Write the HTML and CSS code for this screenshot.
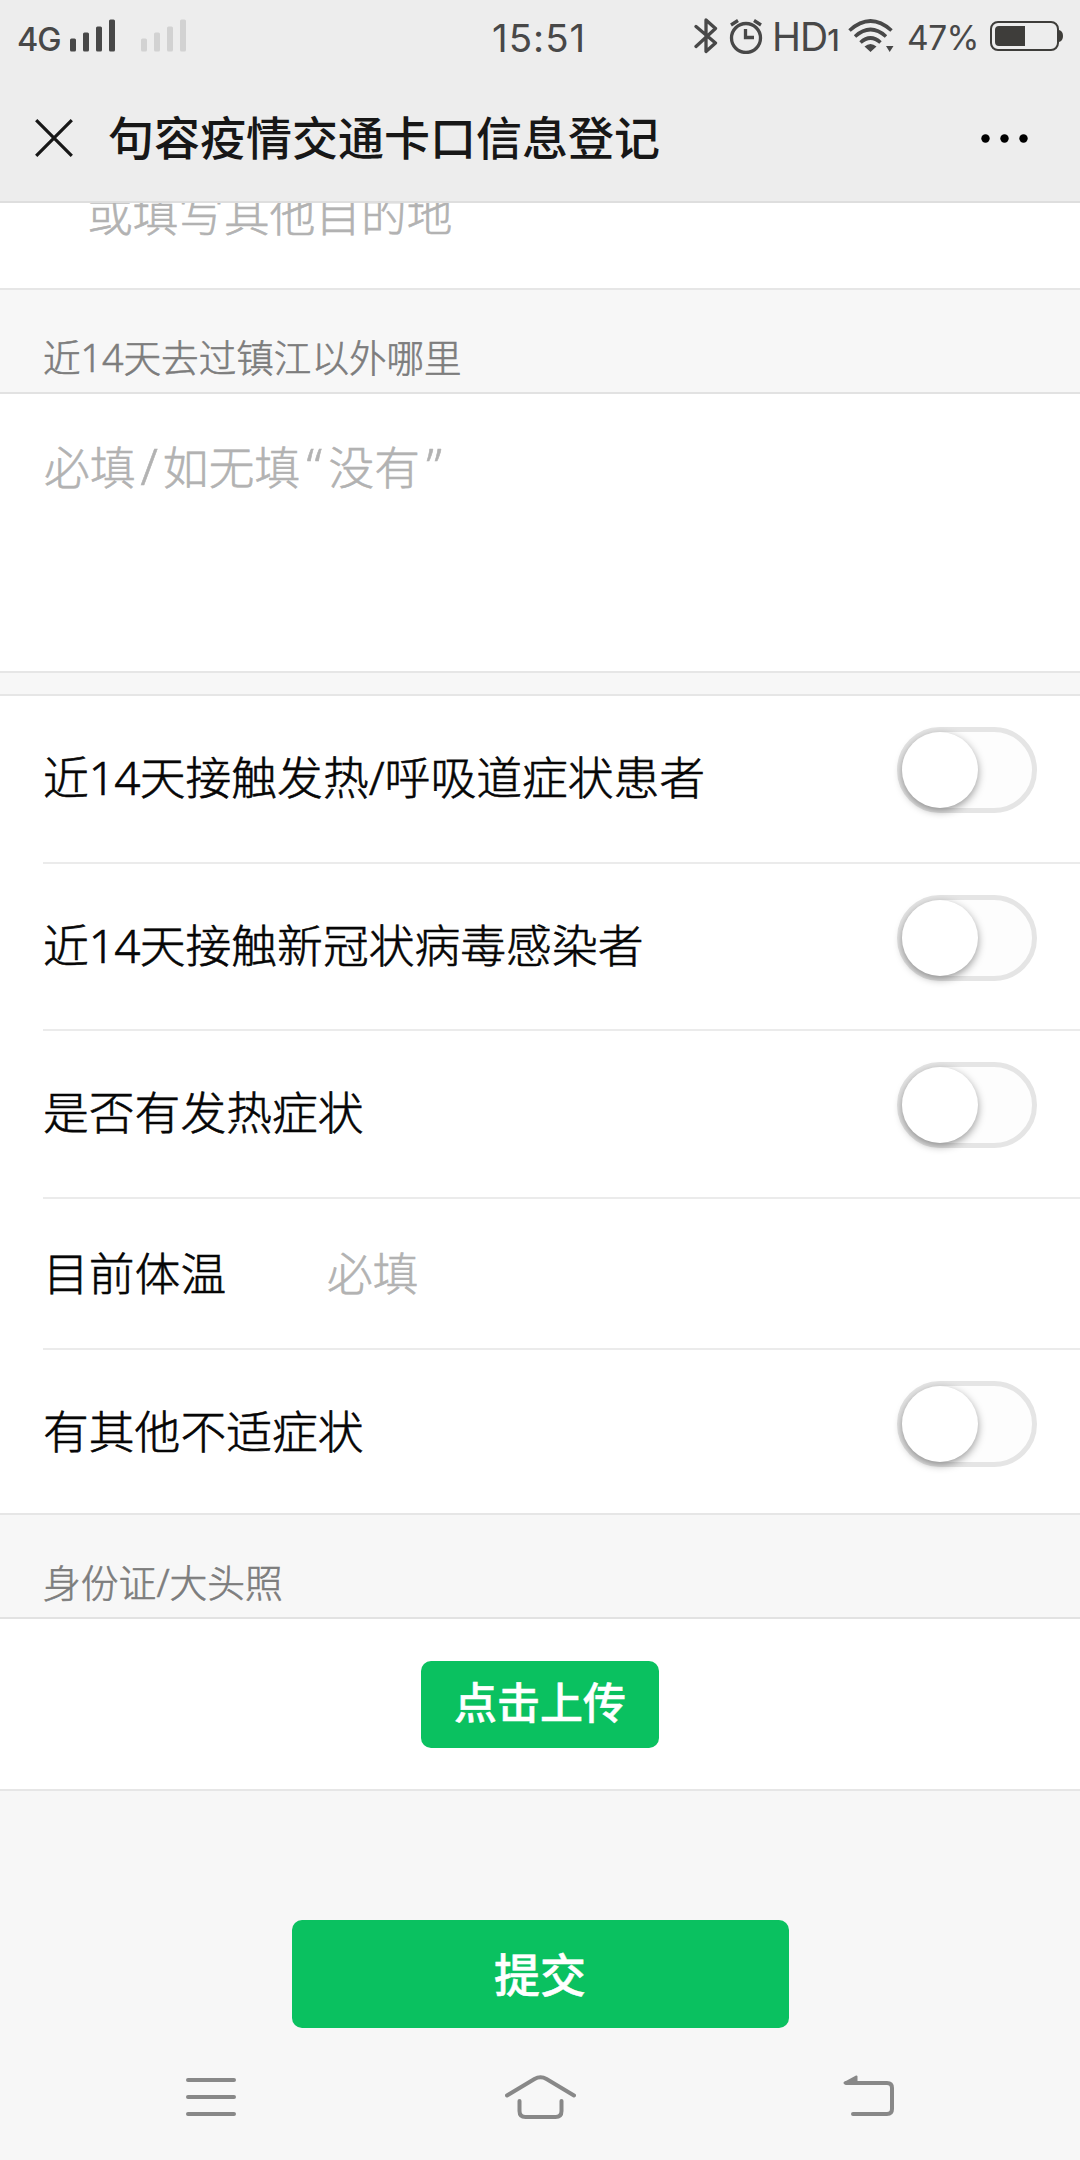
FILE: index.html
```html
<!DOCTYPE html>
<html lang="zh-CN">
<head>
<meta charset="utf-8">
<title>句容疫情交通卡口信息登记</title>
<link rel="stylesheet" href="styles.css">
</head>
<body>
<div class="screen">
  <header class="top">
    <div class="status">
      <div class="status-left">
        <span class="net">4G</span>
        <svg class="signal" width="46" height="33" viewBox="0 0 46 33" fill="#484848"><rect y="19.500" width="6" height="13" rx="1.500"/><rect x="13" y="13.500" width="6" height="19" rx="1.500"/><rect x="26" y="7.500" width="6" height="25" rx="1.500"/><rect x="39" y=".5" width="6" height="32" rx="1.500"/></svg>
        <svg class="signal signal-off" width="46" height="33" viewBox="0 0 46 33" fill="#d2d2d2"><rect y="19.500" width="6" height="13" rx="1.500"/><rect x="13" y="13.500" width="6" height="19" rx="1.500"/><rect x="26" y="7.500" width="6" height="25" rx="1.500"/><rect x="39" y=".5" width="6" height="32" rx="1.500"/></svg>
      </div>
      <div class="clock">15:51</div>
      <div class="status-right">
        <svg class="bt" width="24" height="36" viewBox="0 0 24 36" fill="none" stroke="#484848" stroke-width="3.300" stroke-linejoin="round" stroke-linecap="round"><path d="M2 8.500L21.500 25 12 33.500V2L21.500 10.500 2 28.500"/></svg>
        <svg class="alarm" width="34" height="36" viewBox="0 0 34 36" fill="none" stroke="#484848" stroke-width="3.300"><circle cx="17" cy="20" r="14.500"/><path d="M16.500 11V19.500H25M2 7L9 2.500M25 2.500L32 7"/></svg>
        <span class="hd">HD<small>1</small></span>
        <svg class="wifi" width="46" height="34" viewBox="0 0 46 34" fill="none" stroke="#484848" stroke-width="3.600"><path d="M1.500 11.500Q22.500-7.500 43.500 11.500M7 17.500Q22.500 3.500 38 17.500M12.500 23.500Q22.500 14.500 32.500 23.500"/><path d="M16.500 27.500Q22.500 22.500 28.500 27.500L22.500 33ZM38 27H45.500L41.700 33Z" fill="#484848" stroke="none"/></svg>
        <span class="pct">47%</span>
        <svg class="battery" width="74" height="32" viewBox="0 0 74 32"><rect x="1" y="2" width="67" height="28" rx="7" fill="none" stroke="#3e3d3a" stroke-width="2"/><path d="M9 6H35V26H9Q5 26 5 22V10Q5 6 9 6ZM69 10Q73 11 73 16T69 22Z" fill="#3e3d3a"/></svg>
      </div>
    </div>
    <div class="nav">
      <svg class="close" width="38" height="38" viewBox="0 0 38 38" stroke="#171717" stroke-width="3.200"><path d="M1.200 1.200L36.800 36.800M36.800 1.200L1.200 36.800"/></svg>
      <h1 class="title">句容疫情交通卡口信息登记</h1>
      <svg class="more" width="47" height="9" viewBox="0 0 47 9"><circle cx="4.500" cy="4.500" r="4.200"/><circle cx="23.500" cy="4.500" r="4.200"/><circle cx="42.500" cy="4.500" r="4.200"/></svg>
    </div>
  </header>
  <main>
    <section class="cell dest"><span class="ph">或填写其他目的地</span></section>
    <h2 class="label">近14天去过镇江以外哪里</h2>
    <section class="cell area"><span class="ph">必填<i class="slash">/</i>如无填<i class="quote">“</i>没有<i class="quote">”</i></span></section>
    <div class="gap"></div>
    <section class="list">
      <div class="row"><span>近<i class="num">14</i>天接触发热/呼吸道症状患者</span><b class="switch"></b></div>
      <div class="row"><span>近<i class="num">14</i>天接触新冠状病毒感染者</span><b class="switch"></b></div>
      <div class="row"><span>是否有发热症状</span><b class="switch"></b></div>
      <div class="row temp"><span class="key">目前体温</span><span class="ph">必填</span></div>
      <div class="row last"><span>有其他不适症状</span><b class="switch"></b></div>
    </section>
    <h2 class="label id">身份证/大头照</h2>
    <section class="cell upload"><button class="btn small">点击上传</button></section>
    <div class="submit"><button class="btn big">提交</button></div>
  </main>
  <footer class="keys">
    <svg width="50" height="38" viewBox="0 0 50 38" stroke="#888" stroke-width="4" stroke-linecap="round"><path d="M2 2H48M2 19H48M2 36H48"/></svg>
    <svg class="home" width="71" height="44" viewBox="0 0 71 44" fill="none" stroke="#888" stroke-width="4" stroke-linecap="round"><path d="M2 20.500L29.500 4Q35.500 .5 41.500 4L69 20.500M14.500 26V36Q14.500 42 20.500 42H50.500Q56.500 42 56.500 36V26"/></svg>
    <svg class="back" width="52" height="42" viewBox="0 0 52 42" fill="none" stroke="#888" stroke-width="4" stroke-linecap="round"><path d="M3 8H44Q49 8 49 13V34Q49 39 44 39H10"/><path d="M1.500 8L13.500 1.500V8Z" fill="#888" stroke-width="2" stroke-linejoin="round"/></svg>
  </footer>
</div>
</body>
</html>
```
FILE: styles.css
```css
* { box-sizing: border-box; }
body {
  margin: 0;
  background: #f7f7f7;
  color: #060606;
  font-family: "Noto Sans", "Noto Sans CJK SC", sans-serif;
  font-weight: 300;
}
.screen {
  width: 1080px;
  height: 2160px;
  overflow: hidden;
  display: flex;
  flex-direction: column;
  background: #f7f7f7;
}
h1, h2 { margin: 0; font-weight: 300; }
svg { display: block; flex: none; }
i { font-style: normal; }

.top {
  height: 203px;
  flex: none;
  background: #ededed;
  border-bottom: 2px solid #dedede;
}
.status {
  height: 75px;
  display: grid;
  grid-template-columns: 492px 95px 1fr;
  color: #484848;
  font-family: Inter, sans-serif;
  font-weight: 400;
}
.status-left, .status-right { display: flex; align-items: flex-start; }
.net {
  width: 53px;
  margin-left: 17px;
  padding-top: 20px;
  line-height: 40px;
  font-size: 32.5px;
  font-weight: 500;
  letter-spacing: -1.2px;
}
.signal { margin-top: 19px; }
.signal-off { margin-left: 25px; }
.clock { padding-top: 16px; line-height: 44px; font-size: 38.5px; letter-spacing: 1px; white-space: nowrap; }
.bt { margin: 18px 0 0 107px; }
.alarm { margin: 18px 0 0 11px; }
.hd { width: 67px; margin-left: 9px; padding-top: 15px; line-height: 44px; font-size: 39px; letter-spacing: -1px; white-space: nowrap; }
.hd small { font-size: 30px; font-weight: 500; }
.wifi { margin: 19px 0 0 9px; }
.pct { width: 74px; margin-left: 13px; padding-top: 16px; line-height: 44px; font-size: 33.5px; letter-spacing: -.5px; white-space: nowrap; }
.battery { margin: 20px 0 0 9px; }

.nav { height: 126px; display: flex; align-items: flex-start; }
.close { margin: 44px 0 0 35px; }
.title {
  width: 600px;
  margin: 29px 0 0 35px;
  line-height: 66px;
  font-size: 46px;
  font-weight: 500;
  color: #171717;
}
.more { margin: 59px 52px 0 auto; }

.cell, .list { background: #fff; border-bottom: 2px solid #e6e6e6; }
.label, .row > span { -webkit-text-stroke: .6px currentColor; }
.ph { color: #b2b2b2; font-size: 45.7px; line-height: 66px; white-space: nowrap; -webkit-text-stroke: .6px #b2b2b2; }
.dest { height: 87px; overflow: hidden; padding-left: 87px; }
.dest .ph { display: block; margin-top: -22px; }
.label {
  height: 104px;
  padding: 41px 0 0 43px;
  border-bottom: 2px solid #e2e2e2;
  line-height: 54px;
  font-size: 37.6px;
  color: #7d7d7d;
}
.area { height: 279px; padding: 40px 0 0 44px; }
.area .ph { display: block; letter-spacing: .2px; }
.slash, .quote { display: inline-block; font-size: 50px; line-height: 50px; text-align: center; }
.slash { width: 27px; }
.quote { width: 28px; }
.gap { height: 23px; border-bottom: 2px solid #e6e6e6; }
.list { padding-left: 43px; }
.row {
  height: 167.5px;
  display: flex;
  justify-content: space-between;
  border-bottom: 2px solid #ebebeb;
  padding: 48px 43px 0 0;
  line-height: 66px;
  font-size: 45.8px;
  white-space: nowrap;
}
.num { letter-spacing: -.7px; }
.temp { height: 151.5px; justify-content: flex-start; padding-top: 41px; }
.key { width: 284px; }
.last { height: 163px; border-bottom: 0; }
.switch {
  width: 140px;
  height: 86px;
  margin-top: -17px;
  border: 5px solid #e5e5e5;
  border-radius: 43px;
  background: #fdfdfd;
}
.switch::before {
  content: "";
  display: block;
  width: 76px;
  height: 76px;
  border-radius: 50%;
  background: #fff;
  box-shadow: 0 3px 8px rgba(0, 0, 0, .4);
}
.id { font-size: 37.8px; }
.upload { height: 172px; display: flex; justify-content: center; align-items: flex-start; padding-top: 42px; }
.btn {
  display: flex;
  align-items: center;
  justify-content: center;
  padding: 0;
  border: 0;
  background: #0ac160;
  color: #fff;
  font-family: inherit;
  font-weight: 500;
}
.small { width: 238px; height: 87px; border-radius: 10px; padding-bottom: 8px; font-size: 43px; -webkit-text-stroke: .5px #fff; }
.submit { height: 244px; display: flex; justify-content: center; padding-top: 129px; }
.big { width: 497px; height: 108px; border-radius: 10px; padding-bottom: 5px; font-size: 46px; -webkit-text-stroke: .5px #fff; }

.keys { flex: 1; display: flex; align-items: flex-start; padding: 43px 0 0 186px; }
.home { margin: -3px 0 0 269px; }
.back { margin: -3px 0 0 267px; }
```
